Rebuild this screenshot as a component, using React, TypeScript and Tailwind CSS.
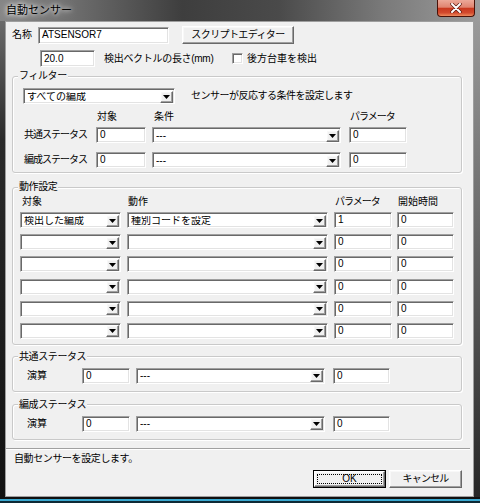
import type { ReactNode } from "react";

const sunken =
  "bg-white border border-t-[#a0a0a0] border-l-[#a0a0a0] border-r-white border-b-white shadow-[inset_1px_1px_0_#696969,inset_-1px_-1px_0_#e3e3e3]";
const raised =
  "bg-[#f0f0f0] border border-t-white border-l-white border-r-[#696969] border-b-[#696969] shadow-[inset_-1px_-1px_0_#a0a0a0,inset_1px_1px_0_#f8f8f8]";

function Field({ className, value }: { className: string; value?: string }) {
  return (
    <div
      className={`${className} ${sunken} h-[16px] shrink-0 flex items-center pl-[3px] text-[10px] leading-none overflow-hidden whitespace-nowrap`}
    >
      {value}
    </div>
  );
}

function DropButton() {
  return (
    <div className={`${raised} w-[13px] h-[12px] shrink-0 flex items-center justify-center`}>
      <svg width="7" height="4" viewBox="0 0 7 4">
        <path d="M0 0h7L3.5 4z" fill="#000" />
      </svg>
    </div>
  );
}

function Combo({ className, value }: { className: string; value?: string }) {
  return (
    <div
      className={`${className} ${sunken} h-[16px] shrink-0 flex items-center pl-[3px] pr-[1px] pt-[1px] text-[10px] leading-none whitespace-nowrap`}
    >
      <span className="flex-1 overflow-hidden">{value}</span>
      <DropButton />
    </div>
  );
}

function Button({
  className,
  children,
  isDefault,
}: {
  className: string;
  children: ReactNode;
  isDefault?: boolean;
}) {
  if (isDefault) {
    return (
      <div className={`${className} h-[18px] border border-black flex`}>
        <div className={`${raised} flex-1 flex p-[2px]`}>
          <div className="flex-1 border border-dotted border-black flex items-center justify-center text-[10px] leading-none">
            {children}
          </div>
        </div>
      </div>
    );
  }
  return (
    <div
      className={`${className} ${raised} h-[18px] flex items-center justify-center text-[10px] leading-none whitespace-nowrap`}
    >
      {children}
    </div>
  );
}

function Group({
  title,
  className,
  children,
}: {
  title: string;
  className: string;
  children: ReactNode;
}) {
  return (
    <fieldset
      className={`${className} ml-[6px] w-[450px] min-w-0 border border-[#c9c9c9] rounded-[3px] shadow-[inset_1px_1px_0_#fff,1px_1px_0_#fff] p-0`}
    >
      <legend className="ml-[5px] px-[1px] h-[12px] bg-[#f0f0f0] text-[10px] leading-[12px] tracking-[-0.4px]">
        {title}
      </legend>
      {children}
    </fieldset>
  );
}

function Label({ className, children }: { className: string; children: ReactNode }) {
  return (
    <div className={`${className} shrink-0 h-[12px] text-[10px] leading-[12px] whitespace-nowrap`}>
      {children}
    </div>
  );
}

const actionRows = [
  { target: "検出した編成", action: "種別コードを設定", param: "1", start: "0" },
  { target: "", action: "", param: "0", start: "0" },
  { target: "", action: "", param: "0", start: "0" },
  { target: "", action: "", param: "0", start: "0" },
  { target: "", action: "", param: "0", start: "0" },
  { target: "", action: "", param: "0", start: "0" },
];

function StatusGroup({ title, className }: { title: string; className: string }) {
  return (
    <Group title={title} className={`${className} pb-[7px]`}>
      <div className="mt-[5px] pl-[14px] flex items-center h-[16px]">
        <Label className="w-[55px]">演算</Label>
        <Field className="w-[48px]" value="0" />
        <Combo className="ml-[6px] w-[189px]" value="---" />
        <Field className="ml-[8px] w-[57px]" value="0" />
      </div>
    </Group>
  );
}

export default function App() {
  return (
    <div className="w-[480px] h-[503px] flex flex-col bg-[#1a1a1a] text-black font-['Liberation_Sans','Noto_Sans_CJK_JP',sans-serif] overflow-hidden">
      {/* title bar */}
      <div className="h-[21px] shrink-0 flex justify-between bg-[linear-gradient(90deg,#868686_0%,#707070_14%,#3e3e3e_38%,#4a4a4a_58%,#7a7a7a_80%,#9c9c9c_100%)]">
        <div className="pl-[6px] pt-[3px] text-[11px] leading-[14px] [text-shadow:0_0_4px_#fff,0_0_8px_#fff]">
          自動センサー
        </div>
        <div className="mr-[5px] w-[38px] h-[17px] rounded-b-[4px] border border-t-0 border-[#4a1208] bg-[linear-gradient(180deg,#eca999_0%,#e08470_45%,#c9391f_52%,#d24a2e_80%,#ef8a5c_100%)] flex items-center justify-center">
          <svg width="12" height="10" viewBox="0 0 12 10">
            <path d="M2 1l8 8M10 1L2 9" stroke="#5a1a10" strokeWidth="3.4" strokeLinecap="round" />
            <path d="M2 1l8 8M10 1L2 9" stroke="#fff" strokeWidth="2" strokeLinecap="round" />
          </svg>
        </div>
      </div>

      <div className="flex h-[476px] shrink-0">
        <div className="w-[5px] bg-[linear-gradient(180deg,#6a6a6a_0%,#2a2a2a_25%,#121212_100%)]" />
        <div className="w-[469px] border border-[#9e9e9e] bg-[#f0f0f0] flex flex-col">
          {/* name row */}
          <div className="mt-[4px] h-[18px] pl-[6px] flex items-center">
            <Label className="w-[26px]">名称</Label>
            <Field className="w-[131px] h-[17px]" value="ATSENSOR7" />
            <Button className="ml-[13px] w-[112px] tracking-[-0.6px]">スクリプトエディター</Button>
          </div>

          {/* length row */}
          <div className="mt-[6px] h-[17px] pl-[34px] flex items-center">
            <Field className="w-[55px] h-[17px]" value="20.0" />
            <Label className="ml-[9px] w-[128px] tracking-[-0.3px]">検出ベクトルの長さ(mm)</Label>
            <div className={`${sunken} w-[11px] h-[11px] shrink-0`} />
            <Label className="ml-[4px]">後方台車を検出</Label>
          </div>

          {/* filter */}
          <Group title="フィルター" className="mt-[3px] pb-[4px]">
            <div className="mt-[6px] pl-[10px] flex items-center h-[16px]">
              <Combo className="w-[152px]" value="すべての編成" />
              <Label className="ml-[16px] tracking-[-0.5px]">センサーが反応する条件を設定します</Label>
            </div>
            <div className="mt-[7px] pl-[11px] flex h-[12px]">
              <div className="w-[73px] shrink-0" />
              <Label className="w-[57px]">対象</Label>
              <Label className="w-[196px]">条件</Label>
              <Label className="w-[60px] tracking-[-1px]">パラメータ</Label>
            </div>
            <div className="mt-[4px] pl-[11px] flex items-center h-[16px]">
              <Label className="w-[72px] tracking-[-1px]">共通ステータス</Label>
              <Field className="w-[50px]" value="0" />
              <Combo className="ml-[6px] w-[189px]" value="---" />
              <Field className="ml-[8px] w-[58px]" value="0" />
            </div>
            <div className="mt-[9px] pl-[11px] flex items-center h-[16px]">
              <Label className="w-[72px] tracking-[-1px]">編成ステータス</Label>
              <Field className="w-[50px]" value="0" />
              <Combo className="ml-[6px] w-[189px]" value="---" />
              <Field className="ml-[8px] w-[58px]" value="0" />
            </div>
          </Group>

          {/* actions */}
          <Group title="動作設定" className="mt-[8px] pb-[5px]">
            <div className="mt-[3px] pl-[9px] flex h-[12px]">
              <Label className="w-[106px]">対象</Label>
              <Label className="w-[207px]">動作</Label>
              <Label className="w-[63px] tracking-[-1px]">パラメータ</Label>
              <Label className="w-[60px]">開始時間</Label>
            </div>
            <div className="mt-[4px] flex flex-col gap-[6.2px]">
              {actionRows.map((r, i) => (
                <div key={i} className="pl-[7px] flex items-center h-[16px]">
                  <Combo className="w-[101px]" value={r.target} />
                  <Combo className="ml-[6px] w-[201px]" value={r.action} />
                  <Field className="ml-[6px] w-[58px]" value={r.param} />
                  <Field className="ml-[5px] w-[57px]" value={r.start} />
                </div>
              ))}
            </div>
          </Group>

          <StatusGroup title="共通ステータス" className="mt-[6px]" />
          <StatusGroup title="編成ステータス" className="mt-[7px]" />

          {/* separator */}
          <div className="mt-[8px] mr-[3px] h-[2px] border-t border-t-[#a0a0a0] border-b border-b-white" />

          <Label className="mt-[3px] ml-[8px] tracking-[-0.4px]">自動センサーを設定します。</Label>

          <div className="mt-[5px] pr-[11px] flex justify-end gap-[3px]">
            <Button className="w-[73px]" isDefault>
              OK
            </Button>
            <Button className="w-[73px] tracking-[-0.8px]">キャンセル</Button>
          </div>
        </div>
        <div className="flex-1 bg-[linear-gradient(180deg,#9a9a9a_0%,#6e6e6e_40%,#262626_100%)]" />
      </div>

      {/* bottom frame */}
      <div className="flex-1 flex flex-col">
        <div className="h-[2px] bg-[#101010]" />
        <div className="h-[2px] bg-[#3aa8d0]" />
        <div className="flex-1 bg-[#0e2a36]" />
      </div>
    </div>
  );
}
